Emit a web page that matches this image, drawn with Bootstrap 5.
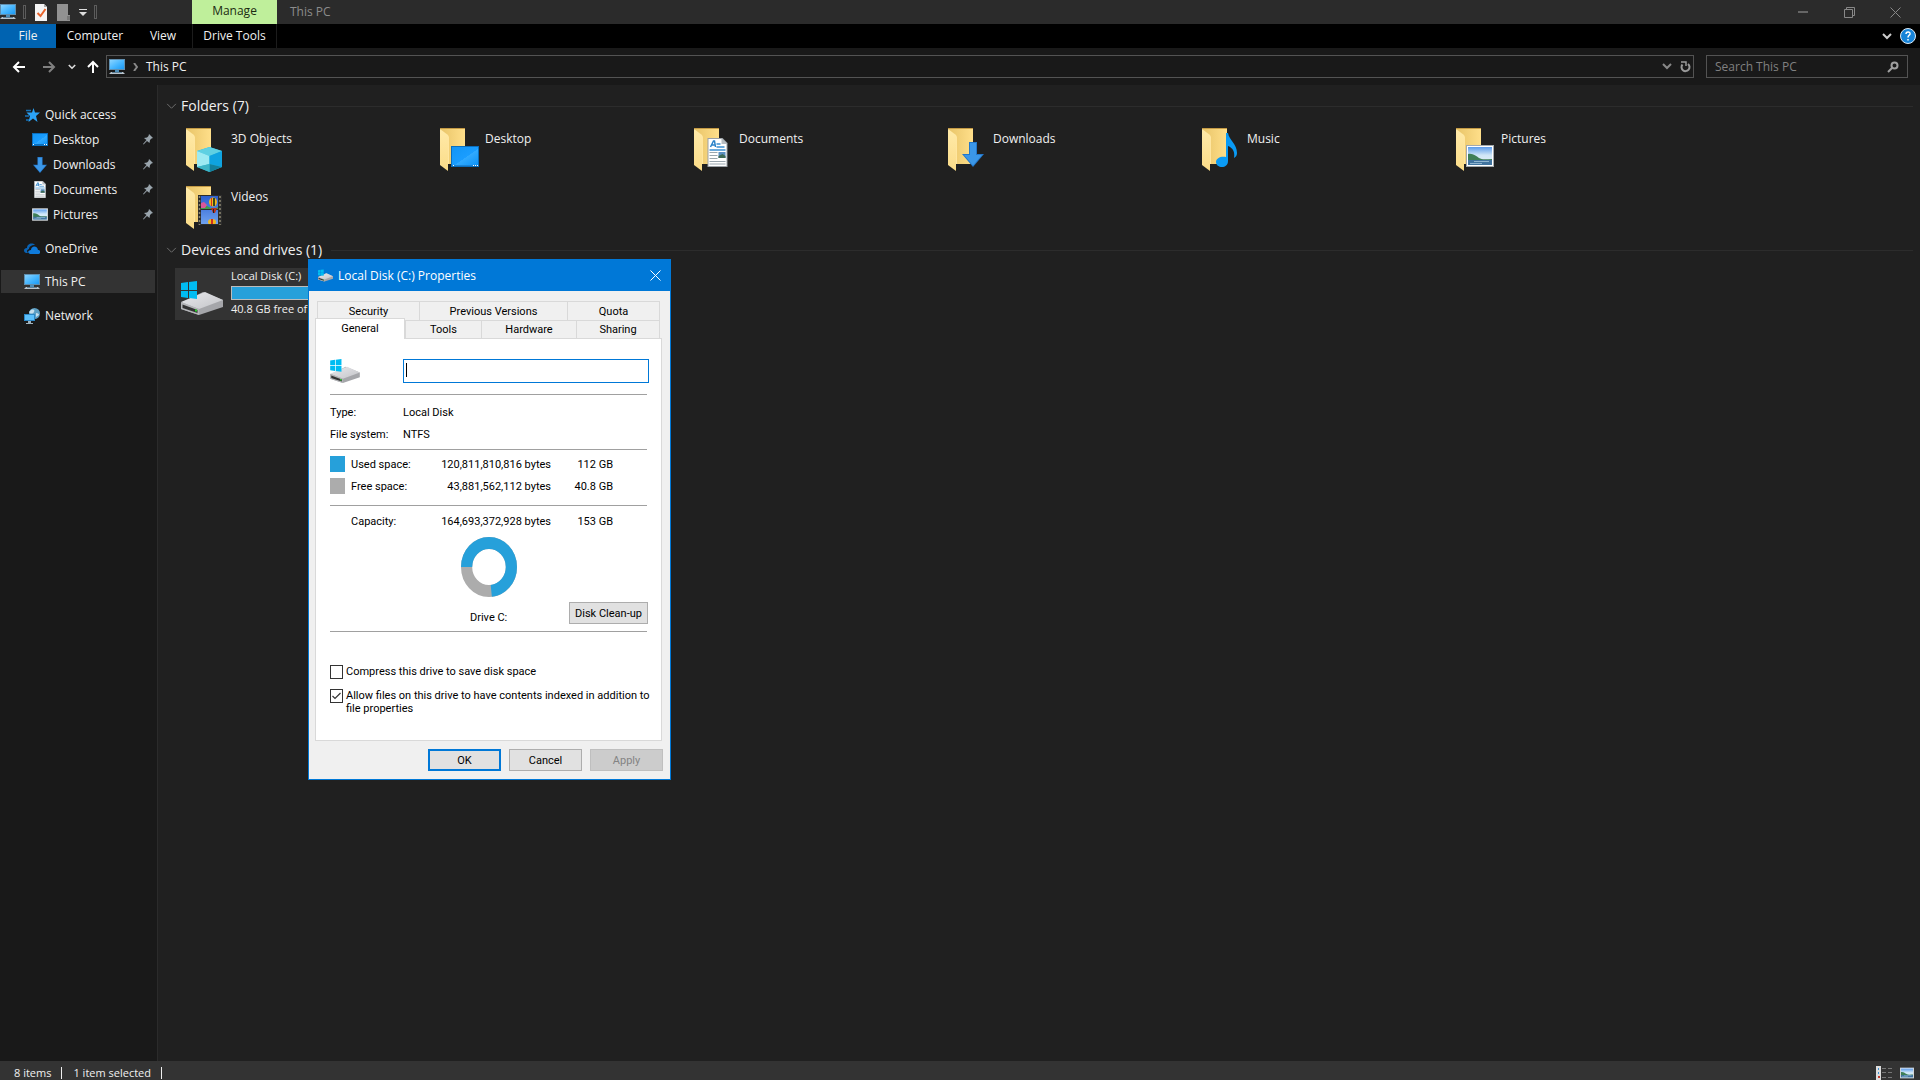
<!DOCTYPE html>
<html lang="en">
<head>
<meta charset="utf-8">
<meta name="viewport" content="width=device-width, initial-scale=1">
<title>This PC</title>
<link href="https://cdn.jsdelivr.net/npm/bootstrap@5.3.0/dist/css/bootstrap.min.css" rel="stylesheet">
<style>
  :root { --ui: "Open Sans", "Noto Sans", sans-serif; --dlg: Roboto, "Liberation Sans", sans-serif; --accent: #0078d7; --used: #26a0da; --free: #acacac; }
  body { font-family: var(--ui); font-size: 12px; line-height: 16px; background: #202020; color: #f0f0f0; }
  a { color: inherit; text-decoration: none; }
  svg { display: block; flex: none; }
  button { font: inherit; color: inherit; background: none; border: 0; padding: 0; }
  .titlebar { height: 24px; background: #2b2b2b; padding-right: 2px; }
  .sep { width: 3px; height: 14px; border: 1px solid #5c5c5c; }
  .quick { width: 192px; gap: 7px; }
  .ctx-tab { width: 85px; background: #bfef9b; color: #1c2b12; line-height: 22px; }
  .caption { color: #8c8c8c; padding-left: 13px; }
  .win-btn { width: 46px; height: 24px; color: #777; }
  .ribbon { height: 24px; background: #000; }
  .ribbon a { line-height: 24px; text-align: center; }
  .file-tab { width: 56px; background: #0063b1; }
  .rib-computer { width: 78px; }
  .rib-view { width: 58px; }
  .ctx-sub { width: 85px; border: solid #1c1c1c; border-width: 0 1px; }
  .navbar-strip { height: 37px; background: #191919; padding: 7px 12px 7px 0; }
  .hist { width: 106px; padding-left: 12px; gap: 11px; }
  .hist .fwd { margin-left: 6px; }
  .addr, .search { height: 23px; border: 1px solid #535353; background: #191919; }
  .addr { padding: 0 2px; }
  .search { width: 202px; }
  .search input { background: none; border: 0; outline: 0; color: #eee; min-width: 0; padding: 0 0 0 8px; }
  .search input::placeholder { color: #808080; opacity: 1; }
  .side { width: 158px; background: #191919; border-right: 1px solid #2b2b2b; padding: 17px 2px 0 1px; }
  .side a { height: 25px; padding-left: 23px; gap: 5px; }
  .side .sub { padding-left: 31px; padding-right: 2px; }
  .side .apart { margin-top: 9px; }
  .side .current { background: #333; height: 23px; margin: 9px 0 1px; }
  .main { padding: 11px 7px 0 8px; }
  .grp { font-size: 14px; line-height: 20px; height: 20px; gap: 4px; }
  .grp h2 { font: inherit; margin: 0; }
  .grp i { height: 1px; background: #2c2c2c; margin-left: 5px; }
  .tiles { padding-left: 9px; }
  .tile { width: 248px; height: 52px; margin: 0 6px 6px 0; padding-left: 5px; }
  .tile .pic { width: 51px; }
  .tile .nm { padding-top: 7px; }
  .drive { background: #333; font-size: 11px; }
  .meter { width: 180px; height: 14px; margin: 2px 0 1px; border-radius: 0; border: 1px solid #bcbcbc; background: #e6e6e6; }
  .meter div { background: var(--used); }
  .status { height: 19px; background: #333; padding: 5px 6px 0 14px; font-size: 11px; line-height: 14px; }
  .status .bar { width: 1px; height: 12px; background: #eee; margin: 0 11px 0 10px; }

  .props { position: absolute; left: 308px; top: 259px; width: 363px; background: #f0f0f0; border: 1px solid var(--accent); color: #000; font-family: var(--dlg); font-size: 11px; line-height: 13px; }
  .props header { height: 31px; background: var(--accent); color: #fff; font-family: var(--ui); font-size: 12px; padding: 0 9px; gap: 5px; }
  .props-body { padding: 10px 8px 8px 6px; }
  .tabrow { padding: 0 2px; }
  .tabrow button { height: 19px; border: solid #d9d9d9; border-width: 1px 0 0 1px; flex: none; }
  .tabrow button:last-child { border-right-width: 1px; }
  .tabrow.low button { height: 18px; }
  .tabrow.low .on { height: 21px; width: 90px; margin: -2px 0 -1px -2px; background: #fff; border-right-width: 1px; z-index: 1; padding-bottom: 2px; }
  .w-a { width: 102px; } .w-b { width: 148px; } .w-c { width: 93px; } .w-d { width: 76px; } .w-e { width: 95px; } .w-f { width: 84px; }
  .pane { background: #fff; border: 1px solid #d9d9d9; padding: 20px 12px 25px 14px; }
  .lbl-in { width: 246px; height: 24px; border: 1px solid var(--accent); padding: 0 3px; outline: 0; caret-color: transparent; background: linear-gradient(#000, #000) 2px 3px / 1px 14px no-repeat #fff; }
  .rule { height: 1px; background: #a0a0a0; margin-right: 2px; }
  .rule.first { margin-top: 11px; }
  .rule.last { margin-top: 7px; }
  .props dl { margin: 0; padding: 6px 0 4px; }
  .props dt { font-weight: 400; width: 73px; }
  .props dd { margin: 0; }
  .line { height: 22px; }
  .sizes { table-layout: fixed; width: 317px; margin-top: 3px; }
  .sizes td, .sizes th { padding: 0; font-weight: 400; height: 22px; }
  .sizes .cut td { height: 13px; padding: 8px 0 4px; }
  .sizes .cut .rule { margin: 0; }
  .c-sw { width: 21px; } .c-name { width: 80px; } .c-bytes { width: 120px; } .c-gb { width: 62px; }
  .sw { width: 15px; height: 16px; }
  .used { background: var(--used); } .free { background: var(--free); }
  .donut { margin: 5px 0 5px 131px; }
  .under { height: 22px; margin-right: 1px; }
  .under span { margin-left: 140px; }
  .pbtn { width: 73px; height: 22px; background: #e1e1e1; border: 1px solid #adadad; }
  .pbtn.wide { width: 79px; }
  .pbtn.def { border: 2px solid var(--accent); }
  .pbtn:disabled { background: #ccc; border-color: #bfbfbf; color: #838383; }
  .checks { padding-top: 33px; gap: 10px; }
  .checks label { gap: 3px; }
  .cb { appearance: none; width: 13px; height: 14px; border: 1px solid #333; background: #fff; margin: 0; flex: none; }
  .cb:checked { background: #fff url("data:image/svg+xml,%3Csvg xmlns='http://www.w3.org/2000/svg' viewBox='0 0 11 12'%3E%3Cpath d='M1.500 6L4 8.500 9.500 3' fill='none' stroke='%23333' stroke-width='1.200'/%3E%3C/svg%3E"); }
  .foot { gap: 8px; padding-top: 8px; margin-right: -1px; }
</style>
<script src="https://cdn.jsdelivr.net/npm/bootstrap@5.3.0/dist/js/bootstrap.bundle.min.js"></script>
</head>
<body class="d-flex flex-column min-vh-100">

<svg width="0" height="0" class="position-absolute" aria-hidden="true">
  <defs>
    <linearGradient id="gScreen" x1="0" y1="0" x2="1" y2="1"><stop offset="0" stop-color="#8ad4ff"/><stop offset=".5" stop-color="#4ab8ff"/><stop offset="1" stop-color="#1b9af5"/></linearGradient>
    <linearGradient id="gFront" x1="0" y1="0" x2="0" y2="1"><stop offset="0" stop-color="#ffeaa9"/><stop offset="1" stop-color="#fbdc88"/></linearGradient>
    <linearGradient id="gBack" x1="0" y1="0" x2="1" y2="0"><stop offset="0" stop-color="#e8c468"/><stop offset="1" stop-color="#ffdf8a"/></linearGradient>
    <linearGradient id="gTop" x1="0" y1="0" x2="1" y2="1"><stop offset="0" stop-color="#e9e9ec"/><stop offset="1" stop-color="#c3c4c8"/></linearGradient>
    <linearGradient id="gSky" x1="0" y1="0" x2="0" y2="1"><stop offset="0" stop-color="#5b9bea"/><stop offset=".45" stop-color="#cfe6f7"/><stop offset="1" stop-color="#e6f0f5"/></linearGradient>
    <linearGradient id="gDesk" x1="0" y1="0" x2="1" y2="1"><stop offset="0" stop-color="#1295f5"/><stop offset=".55" stop-color="#1a9dff"/><stop offset=".56" stop-color="#31aaff"/><stop offset="1" stop-color="#0f93f6"/></linearGradient>
    <linearGradient id="gFilm" x1="0" y1="0" x2="0" y2="1"><stop offset="0" stop-color="#2c5fd0"/><stop offset="1" stop-color="#6fa2ee"/></linearGradient>
  </defs>
  <symbol id="pc" viewBox="0 0 16 16"><path d="M0 0h16v11H0z" fill="#5f8fb0"/><path d="M1 1h14v9H1z" fill="url(#gScreen)"/><path d="M6 11h4v2H6z" fill="#4c8db8"/><path d="M2 13h12l2 2H0z" fill="#b9c4cc"/><path d="M3 13h10v1H3z" fill="#5f7f95"/></symbol>
  <symbol id="folder" viewBox="0 0 36 44"><path d="M0 0h25v36H5z" fill="url(#gBack)"/><path d="M0 0h25v1H0z" fill="#c49a45"/><path d="M0 1l8 6v36l-8-6z" fill="url(#gFront)"/><path d="M8 7v29h1V9z" fill="#ffe6a0"/></symbol>
  <symbol id="deskI" viewBox="0 0 28 21"><path d="M0 0h28v21H0z" fill="#0a6ebd"/><path d="M1 1h26v18H1z" fill="url(#gDesk)"/><path d="M1 19h26v1H1z" fill="#1b84d6"/><path d="M2 19h1v1H2zM22 19h1v1h-1zM24 19h1v1h-1zM26 19h1v1h-1z" fill="#fff"/></symbol>
  <symbol id="down" viewBox="0 0 22 25"><path d="M7 0h8v12h7L11 25 0 12h7z" fill="#2477c9"/><path d="M8 1h6v12h6l-9 10.500L2 13h6z" fill="#3b97e8"/></symbol>
  <symbol id="docI" viewBox="0 0 20 29"><path d="M0 0h15l5 5v24H0z" fill="#9aa0a5"/><path d="M1 1h13l5 5v22H1z" fill="#fff"/><path d="M14 0v6h6z" fill="#b7bdc2"/><path d="M3 9l3-6h1l1 6M4 7h4" stroke="#2b83c9" stroke-width="1.500" fill="none"/><path d="M9 6h4M9 9h8M2 12h16" stroke="#3b8fd0" stroke-width="1.300"/><path d="M11 14h7v6h-7z" fill="#5b8fc0"/><path d="M11 18l4-2 3 2v2h-7z" fill="#3e6a55"/><path d="M2 14.500h8M2 17.500h8M2 20.500h8M2 23.500h16M2 26h16" stroke="#9aa6ae"/></symbol>
  <symbol id="picI" viewBox="0 0 28 22"><path d="M0 0h28v22H0z" fill="#a3a9ad"/><path d="M1 1h26v20H1z" fill="#fff"/><path d="M2 2h24v18H2z" fill="url(#gSky)"/><path d="M2 9c5-1 8 2 11 4s8 1 13 1v2H2z" fill="#3f7f57"/><path d="M2 15h24v5H2z" fill="#41749f"/><path d="M8 16h15v1H8zM4 18h12v1H4z" fill="#8fb5d0"/></symbol>
  <symbol id="cube" viewBox="0 0 25 25"><path d="M12.500 0L25 4v16l-12.500 5L0 20V4z" fill="#29b7da"/><path d="M12.500 0L25 4l-12.500 5L0 4z" fill="#5fd0e2"/><path d="M0 4l12.500 5v8L0 20z" fill="#9deaf2"/><path d="M12.500 9L25 4v16l-12.500-3z" fill="#0fa3e0"/><path d="M12.500 17L25 20l-12.500 5z" fill="#13809d"/><path d="M12.500 17v8L0 20z" fill="#3fb6c6"/></symbol>
  <symbol id="note" viewBox="0 0 22 34"><path d="M10 0h2c1 7 9 11 9 20 0 2-1 4-3 5 1-6-1-10-6-12v15c0 4-3 6-6 6s-6-2-6-5c0-4 5-6 10-5z" fill="#0a9bf5"/></symbol>
  <symbol id="film" viewBox="0 0 24 30"><path d="M0 0h24v30H0z" fill="#2c2c2c"/><path d="M3 1h17v13H3zM3 15h17v14H3z" fill="url(#gFilm)"/><path d="M3 11q4-2 8 1t9 0v2H3z" fill="#3e9e4a"/><path d="M3 8l3-1 3 3-2 3H3z" fill="#d8579a"/><ellipse cx="15" cy="7" rx="4" ry="4.500" fill="#f2b81d"/><path d="M13 3h1v8h-1z" fill="#d2301f"/><path d="M15 3h2v8h-2z" fill="#3a4a1e"/><path d="M13 13h6l-2 5h-2z" fill="#b8301f"/><path d="M15 14h1v4h-1z" fill="#222"/><ellipse cx="14" cy="27" rx="4" ry="3" fill="#f2b81d"/><path d="M13 24h2v5h-2z" fill="#d2301f"/><path d="M3 29h17v1H3z" fill="#2c2c2c"/><path d="M1.500 1v29M22 1v29" stroke="#8d8872" stroke-width="1.500" stroke-dasharray="2 2"/></symbol>
  <symbol id="driveI" viewBox="0 0 42 34"><path d="M0 22l22-11 20 8v7L18 34 0 28z" fill="#a5a6aa"/><path d="M0 21l24-10 18 8-24 9z" fill="url(#gTop)"/><path d="M0 21l18 7v6L0 28z" fill="#b5b6b9"/><path d="M1.500 23.500l15 5.500v3L1.500 27z" fill="#333"/><path d="M14 28.500h2v2h-2z" fill="#27d427"/><path d="M0 2l7-1v8H0zM8 1l8-1v9H8zM0 10h7v7l-7-1zM8 10h8v8l-8-1z" fill="#00bcf2"/></symbol>
  <symbol id="pin" viewBox="0 0 10 11"><path d="M6 0l4 4-1.500.5L7 6l-.5 3L4 7 .5 10.500 0 10l3.500-4L1 4l3-.5L5.500 2z" fill="#9aa5ad"/></symbol>
  <symbol id="chev" viewBox="0 0 12 8"><path d="M1 1l5 5 5-5" fill="none" stroke="currentColor"/></symbol>
  <symbol id="chevB" viewBox="0 0 10 7"><path d="M1 1l4 4 4-4" fill="none" stroke="currentColor" stroke-width="2"/></symbol>
</svg>

<header class="titlebar d-flex align-items-stretch">
  <div class="quick d-flex align-items-center">
    <svg width="16" height="16"><use href="#pc"/></svg>
    <span class="sep"></span>
    <svg width="16" height="17" viewBox="0 0 16 17"><path d="M2 0h9l3 3v14H2z" fill="#f4f4f4"/><path d="M11 0v3h3z" fill="#aaa"/><path d="M4.500 9l3 3 5-7" fill="none" stroke="#e8642c" stroke-width="2"/></svg>
    <svg width="16" height="17" viewBox="0 0 16 17"><path d="M1 0h11v11h2v6H1z" fill="#919191"/><path d="M11 12h3v4h-3z" fill="#777"/></svg>
    <svg width="8" height="7" viewBox="0 0 8 7"><path d="M0 0h8v1H0zM0 3h8L4 7z" fill="#ddd"/></svg>
    <span class="sep"></span>
  </div>
  <a href="#" class="ctx-tab text-center">Manage</a>
  <span class="caption flex-grow-1 align-self-center">This PC</span>
  <button class="win-btn d-flex align-items-center justify-content-center" aria-label="Minimise"><svg width="10" height="2"><path d="M0 0h10v2H0z" fill="#666"/></svg></button>
  <button class="win-btn d-flex align-items-center justify-content-center" aria-label="Restore"><svg width="11" height="11" fill="none" stroke="#888"><path d="M.5 2.500h8v8h-8zM2.500 2V.5h8v8H9"/></svg></button>
  <button class="win-btn d-flex align-items-center justify-content-center" aria-label="Close"><svg width="11" height="11" stroke="#888"><path d="M.5.5l10 10M10.500.5l-10 10"/></svg></button>
</header>

<nav class="ribbon d-flex">
  <a href="#" class="file-tab">File</a>
  <a href="#" class="rib-computer">Computer</a>
  <a href="#" class="rib-view">View</a>
  <a href="#" class="ctx-sub">Drive Tools</a>
  <div class="ms-auto d-flex align-items-center gap-2 pe-1">
    <button aria-label="Collapse ribbon"><svg width="10" height="7" color="#ccc"><use href="#chevB"/></svg></button>
    <button aria-label="Help"><svg width="16" height="16" viewBox="0 0 16 16"><circle cx="8" cy="8" r="7.500" fill="#1683d8" stroke="#dfeaf3"/><path d="M6 6c0-3 4.500-2.500 4 0-.3 1.300-2 1.500-2 3.500M8 11v1.500" fill="none" stroke="#fff" stroke-width="1.500"/></svg></button>
  </div>
</nav>

<div class="navbar-strip d-flex align-items-center">
  <div class="hist d-flex align-items-center">
    <button aria-label="Back"><svg width="14" height="12" fill="none" stroke="#fff" stroke-width="2"><path d="M13 6H2M7 1L2 6l5 5"/></svg></button>
    <button aria-label="Forward" class="fwd"><svg width="14" height="12" fill="none" stroke="#808080" stroke-width="2"><path d="M0 6h11M6 1l5 5-5 5"/></svg></button>
    <button aria-label="Recent locations"><svg width="8" height="6" color="#ddd"><use href="#chevB"/></svg></button>
    <button aria-label="Up"><svg width="12" height="13" fill="none" stroke="#fff" stroke-width="2"><path d="M6 13V2M1 7l5-5 5 5"/></svg></button>
  </div>
  <div class="addr flex-grow-1 d-flex align-items-center me-2">
    <svg width="16" height="16"><use href="#pc"/></svg>
    <svg class="ms-2" width="5" height="8" fill="none" stroke="#888" stroke-width="2"><path d="M1 0l3 4-3 4"/></svg>
    <a href="#" class="ms-2 flex-grow-1">This PC</a>
    <button aria-label="Previous locations"><svg width="10" height="7" color="#888"><use href="#chevB"/></svg></button>
    <button aria-label="Refresh" class="ms-2"><svg width="11" height="12" viewBox="0 0 11 12" fill="none" stroke="#999" stroke-width="2"><path d="M8 3a4 4 0 1 1-5.500.5"/><path d="M1 1h5v4" stroke-width="1.500"/></svg></button>
  </div>
  <div class="search d-flex align-items-center ms-1">
    <input class="flex-grow-1" type="text" placeholder="Search This PC" aria-label="Search This PC">
    <svg class="me-2" width="12" height="12" fill="none" stroke="#a0a0a0" stroke-width="2"><circle cx="7.500" cy="4.500" r="3"/><path d="M5 7L1 11"/></svg>
  </div>
</div>

<div class="d-flex flex-grow-1">
  <nav class="side d-flex flex-column flex-shrink-0">
    <a href="#" class="d-flex align-items-center"><svg width="16" height="14" viewBox="0 0 16 14"><path d="M9.500 0L11 4.500h5l-4 3.500 1.500 6-4.500-3.500L4.500 14 6 8 2.500 4.500H8z" fill="#2ba3f7"/><path d="M2 2.500h5M1 8h4M2 12h3" stroke="#1672b8" stroke-width="1.500"/></svg>Quick access</a>
    <a href="#" class="sub d-flex align-items-center"><svg width="16" height="13" viewBox="0 0 16 13"><path d="M0 0h16v13H0z" fill="#0a6ebd"/><path d="M1 1h14v10H1z" fill="url(#gDesk)"/><path d="M1 11h1v1H1zM12 11h1v1h-1zM14 11h1v1h-1z" fill="#fff"/></svg><span class="flex-grow-1">Desktop</span><svg width="10" height="11"><use href="#pin"/></svg></a>
    <a href="#" class="sub d-flex align-items-center"><svg width="16" height="16"><use href="#down"/></svg><span class="flex-grow-1">Downloads</span><svg width="10" height="11"><use href="#pin"/></svg></a>
    <a href="#" class="sub d-flex align-items-center"><svg width="16" height="17"><use href="#docI"/></svg><span class="flex-grow-1">Documents</span><svg width="10" height="11"><use href="#pin"/></svg></a>
    <a href="#" class="sub d-flex align-items-center"><svg width="16" height="13"><use href="#picI"/></svg><span class="flex-grow-1">Pictures</span><svg width="10" height="11"><use href="#pin"/></svg></a>
    <a href="#" class="apart d-flex align-items-center"><svg width="16" height="11" viewBox="0 0 16 11"><path d="M2 10C-1 9-.5 5 3 5c0-4 5-6 8-3-4 0-6 2-6 4-3 1-2 3-1 4z" fill="#0a63b5"/><path d="M6 11c-3-1-2-4 1-4 0-4 6-5 7 0 3 0 3 4 0 4z" fill="#0f7bdc"/></svg>OneDrive</a>
    <a href="#" class="current d-flex align-items-center"><svg width="16" height="16"><use href="#pc"/></svg>This PC</a>
    <a href="#" class="apart d-flex align-items-center"><svg width="16" height="16" viewBox="0 0 16 16"><circle cx="10.500" cy="5.500" r="5.500" fill="#5d9fc4"/><path d="M7 2c3-1 4 0 3 2S6 6 5 4zM12 5c2 0 3 1 3 2l-3 2z" fill="#c6dfec"/><path d="M0 6h11v7H0z" fill="#2b87c6"/><path d="M1 7h9v5H1z" fill="#5cc0fb"/><path d="M4 13h3v2H4zM2 15h7v1H2z" fill="#9fb3bf"/></svg>Network</a>
  </nav>

  <main class="main flex-grow-1">
    <div class="grp d-flex align-items-center"><svg width="11" height="7" color="#777"><use href="#chev"/></svg><h2>Folders (7)</h2><i class="flex-grow-1"></i></div>
    <div class="tiles d-flex flex-wrap pt-2">
      <a href="#" class="tile d-flex"><svg class="pic" height="52" viewBox="-6 -4 51 52"><use href="#folder" width="36" height="44"/><use href="#cube" x="11" y="19" width="25" height="25"/></svg><span class="nm">3D Objects</span></a>
      <a href="#" class="tile d-flex"><svg class="pic" height="52" viewBox="-6 -4 51 52"><use href="#folder" width="36" height="44"/><use href="#deskI" x="11" y="18" width="28" height="21"/></svg><span class="nm">Desktop</span></a>
      <a href="#" class="tile d-flex"><svg class="pic" height="52" viewBox="-6 -4 51 52"><use href="#folder" width="36" height="44"/><use href="#docI" x="13" y="10" width="21" height="29"/></svg><span class="nm">Documents</span></a>
      <a href="#" class="tile d-flex"><svg class="pic" height="52" viewBox="-6 -4 51 52"><use href="#folder" width="36" height="44"/><use href="#down" x="14" y="14" width="22" height="25"/></svg><span class="nm">Downloads</span></a>
      <a href="#" class="tile d-flex"><svg class="pic" height="52" viewBox="-6 -4 51 52"><use href="#folder" width="36" height="44"/><use href="#note" x="14" y="5" width="22" height="34"/></svg><span class="nm">Music</span></a>
      <a href="#" class="tile d-flex"><svg class="pic" height="52" viewBox="-6 -4 51 52"><use href="#folder" width="36" height="44"/><use href="#picI" x="10" y="17" width="28" height="22"/></svg><span class="nm">Pictures</span></a>
      <a href="#" class="tile d-flex"><svg class="pic" height="52" viewBox="-6 -4 51 52"><use href="#folder" width="36" height="44"/><use href="#film" x="12" y="9" width="24" height="30"/></svg><span class="nm">Videos</span></a>
    </div>
    <div class="grp d-flex align-items-center"><svg width="11" height="7" color="#777"><use href="#chev"/></svg><h2>Devices and drives (1)</h2><i class="flex-grow-1"></i></div>
    <div class="tiles d-flex flex-wrap pt-2">
      <a href="#" class="tile drive d-flex"><svg class="pic" height="52" viewBox="-1 -13 51 52"><use href="#driveI" width="42" height="34"/></svg><span><span class="d-block">Local Disk (C:)</span><span class="meter progress"><div style="width:73%"></div></span><span class="d-block">40.8 GB free of</span></span></a>
    </div>
  </main>
</div>

<footer class="status d-flex align-items-center">
  <span>8 items</span><span class="bar"></span><span>1 item selected</span><span class="bar"></span>
  <button class="ms-auto" aria-label="Details view"><svg width="16" height="14" viewBox="0 0 16 14"><path d="M0 0h5v14H0z" fill="#ddd"/><path d="M2 2h1v2H2zM2 6h1v2H2z" fill="#3b8fd0"/><path d="M2 10h2v2H2z" fill="#c0392b"/><path d="M6 2h4v1H6zM12 2h4v1h-4zM6 6h4v1H6zM12 6h4v1h-4zM6 11h4v1H6zM12 11h4v1h-4z" fill="#777"/></svg></button>
  <button class="ms-2" aria-label="Large icons view"><svg width="14" height="12"><use href="#picI"/></svg></button>
</footer>

<section class="props" role="dialog" aria-labelledby="dlgTitle">
  <header class="d-flex align-items-center">
    <svg width="15" height="13"><use href="#driveI"/></svg>
    <span id="dlgTitle" class="flex-grow-1">Local Disk (C:) Properties</span>
    <button aria-label="Close"><svg width="11" height="11" stroke="#fff"><path d="M.5.5l10 10M10.500.5l-10 10"/></svg></button>
  </header>
  <div class="props-body">
    <div class="tabrow d-flex"><button class="w-a">Security</button><button class="w-b">Previous Versions</button><button class="w-c">Quota</button></div>
    <div class="tabrow low d-flex"><button class="on">General</button><button class="w-d">Tools</button><button class="w-e">Hardware</button><button class="w-f">Sharing</button></div>
    <div class="pane">
      <div class="d-flex justify-content-between align-items-center"><svg width="30" height="24"><use href="#driveI"/></svg><input class="lbl-in" type="text" aria-label="Volume label"></div>
      <div class="rule first"></div>
      <dl><div class="line d-flex align-items-center"><dt>Type:</dt><dd>Local Disk</dd></div><div class="line d-flex align-items-center"><dt>File system:</dt><dd>NTFS</dd></div></dl>
      <div class="rule"></div>
      <table class="sizes">
        <colgroup><col class="c-sw"><col class="c-name"><col class="c-bytes"><col class="c-gb"><col></colgroup>
        <tbody>
          <tr><td><div class="sw used"></div></td><th scope="row">Used space:</th><td class="text-end">120,811,810,816 bytes</td><td class="text-end">112 GB</td><td></td></tr>
          <tr><td><div class="sw free"></div></td><th scope="row">Free space:</th><td class="text-end">43,881,562,112 bytes</td><td class="text-end">40.8 GB</td><td></td></tr>
          <tr class="cut"><td colspan="5"><div class="rule"></div></td></tr>
          <tr><td></td><th scope="row">Capacity:</th><td class="text-end">164,693,372,928 bytes</td><td class="text-end">153 GB</td><td></td></tr>
        </tbody>
      </table>
      <svg class="donut" width="56" height="60" viewBox="0 0 60 60" preserveAspectRatio="none" fill="none" stroke-width="12"><circle cx="30" cy="30" r="24" stroke="#acacac"/><circle cx="30" cy="30" r="24" stroke="#26a0da" pathLength="100" stroke-dasharray="73.300 26.700" transform="rotate(180 30 30)"/></svg>
      <div class="under d-flex align-items-end justify-content-between"><span>Drive C:</span><button class="pbtn wide">Disk Clean-up</button></div>
      <div class="rule last"></div>
      <div class="checks d-flex flex-column">
        <label class="d-flex text-nowrap"><input class="cb" type="checkbox"><span>Compress this drive to save disk space</span></label>
        <label class="d-flex text-nowrap"><input class="cb" type="checkbox" checked><span>Allow files on this drive to have contents indexed in addition to<br>file properties</span></label>
      </div>
    </div>
    <div class="foot d-flex justify-content-end"><button class="pbtn def">OK</button><button class="pbtn">Cancel</button><button class="pbtn" disabled>Apply</button></div>
  </div>
</section>
</body>
</html>
